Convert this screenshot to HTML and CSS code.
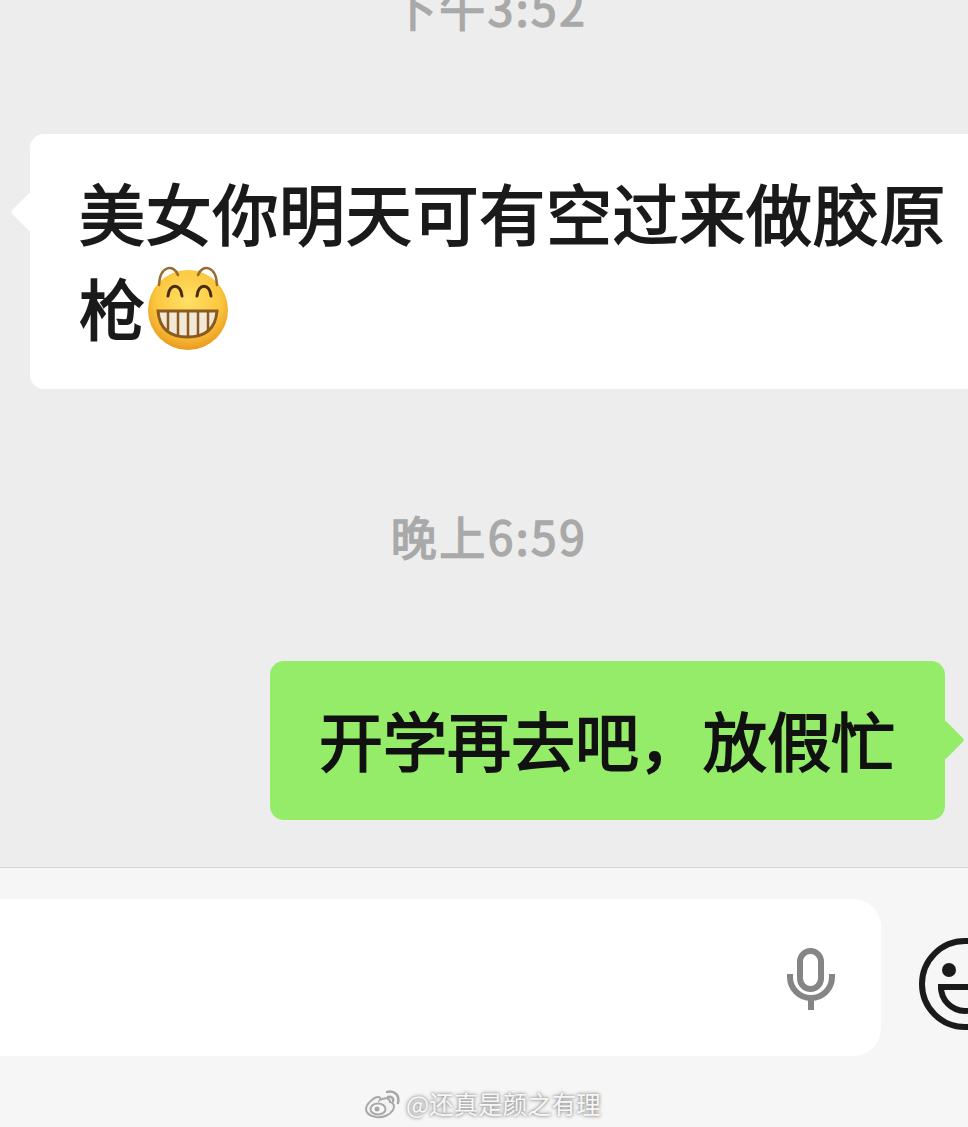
FILE: index.html
```html
<!DOCTYPE html>
<html lang="zh-CN">
<head>
    <meta charset="UTF-8">
    <meta name="viewport" content="width=device-width, initial-scale=1.0">
    <title>聊天</title>
    <link rel="stylesheet" href="styles.css">
</head>
<body>
    <!-- Messages -->
    <main class="chat">
        <div class="time time-first">下午3:52</div>
        <div class="bubble bubble-in">
            美女你明天可有空过来做胶原枪<svg class="grin" viewBox="0 0 82 84" role="img" aria-label="呲牙">
                <defs>
                    <radialGradient id="face" cx="50%" cy="38%" r="62%">
                        <stop offset="0" stop-color="#ffe066"/>
                        <stop offset="0.65" stop-color="#fbc73e"/>
                        <stop offset="1" stop-color="#eb9a1f"/>
                    </radialGradient>
                </defs>
                <circle cx="41" cy="44" r="40" fill="url(#face)"/>
                <path d="M12 19C13 -1 27 -2 31 9M51 9C55 -2 69 -1 70 19" fill="none" stroke="#9a6b2c" stroke-width="2.500" stroke-linecap="round"/>
                <path d="M21 30C22 17 34 17 35 30M50 30C51 17 63 17 64 30" fill="none" stroke="#4a2a0c" stroke-width="3" stroke-linecap="round"/>
                <path d="M11 45H70Q68 71 40.500 71Q13 71 11 45Z" fill="#f1e8d8" stroke="#8a5a1e" stroke-width="3"/>
                <path d="M21 46V64M31 46V70M41 46V71M51 46V70M61 46V64" fill="none" stroke="#8a5a1e" stroke-width="2.500"/>
            </svg>
        </div>
        <div class="time">晚上6:59</div>
        <div class="bubble bubble-out">开学再去吧，放假忙</div>
    </main>

    <!-- Input bar -->
    <footer class="composer">
        <div class="input-box">
            <svg class="mic" viewBox="0 0 48 62" role="img" aria-label="语音">
                <rect x="13" y="3" width="21" height="38" rx="10.500" fill="none" stroke="#858585" stroke-width="6"/>
                <path d="M3 26V29A21 21 0 0 0 45 29V26" fill="none" stroke="#858585" stroke-width="6"/>
                <path d="M24 50V62" fill="none" stroke="#858585" stroke-width="6"/>
            </svg>
        </div>
        <svg class="smile" viewBox="0 0 92 92" role="img" aria-label="表情">
            <circle cx="46" cy="46" r="43" fill="none" stroke="#1a1a1a" stroke-width="6"/>
            <circle cx="30" cy="32" r="7" fill="#1a1a1a"/>
            <path d="M19 49H92M22 49A24 24 0 0 0 70 49" fill="none" stroke="#1a1a1a" stroke-width="6"/>
        </svg>
    </footer>

    <!-- Watermark -->
    <div class="watermark">
        <svg class="weibo" viewBox="0 0 36 30" role="img" aria-label="微博">
            <path d="M15 11C20 8 25 9 25 13C29 14 30 17 28 21C25 26 18 29 11 28C5 27 1 24 1 20C1 15 9 8 13 8C15 8 16 9 15 11Z" fill="#f3f3f3" stroke="#a8a8a8" stroke-width="2"/>
            <ellipse cx="13" cy="20" rx="7.500" ry="5.500" fill="#f8f8f8" stroke="#a8a8a8" stroke-width="2"/>
            <circle cx="12" cy="20" r="2.500" fill="#a8a8a8"/>
            <path d="M22 3C29 1 35 6 33 14M23 8C26 7 29 9 28 12" fill="none" stroke="#a8a8a8" stroke-width="2.500" stroke-linecap="round"/>
        </svg>
        <span>@还真是颜之有理</span>
    </div>
</body>
</html>
```

FILE: styles.css
```css
/* General Styles */
html, body {
    height: 100%;
    overflow: hidden;
}

body {
    position: relative;
    margin: 0;
    display: flex;
    flex-direction: column;
    font-family: "Noto Sans CJK SC", "Noto Sans", sans-serif;
    background-color: #f6f6f6;
    color: #1a1a1a;
}

/* Messages */
.chat {
    height: 867px;
    flex-shrink: 0;
    background-color: #ededed;
}

.time {
    height: 60px;
    margin-top: 116px;
    padding-left: 10px;
    line-height: 60px;
    font-size: 46px;
    letter-spacing: 2.500px;
    -webkit-text-stroke: 1.500px #a9a9a9;
    text-align: center;
    color: #a9a9a9;
}

.time-first {
    margin-top: -24px;
}

.bubble {
    position: relative;
    box-sizing: border-box;
    padding: 30px 50px 35px;
    border-radius: 14px;
    line-height: 95px;
}

.bubble::after {
    content: "";
    position: absolute;
    width: 28px;
    height: 28px;
    border-radius: 3px;
    background-color: inherit;
    transform: rotate(45deg);
}

.bubble-in {
    width: 970px;
    margin: 98px 0 0 30px;
    padding-left: 49px;
    background-color: #fff;
    font-size: 66px;
    letter-spacing: 0.700px;
    -webkit-text-stroke: 1.800px #1a1a1a;
}

.bubble-in::after {
    top: 64px;
    left: -14px;
}

.bubble-out {
    width: 675px;
    height: 159px;
    margin: 96px 0 0 270px;
    padding: 30px 49px;
    background-color: #95ec69;
    font-size: 64px;
    color: #111;
    -webkit-text-stroke: 1.800px #111;
}

.bubble-out::after {
    top: 65px;
    right: -14px;
}

.grin {
    width: 82px;
    height: 84px;
    margin-left: 1px;
    vertical-align: -15px;
    -webkit-text-stroke: 0;
}

/* Input bar */
.composer {
    flex: 1;
    display: flex;
    align-items: flex-start;
    gap: 38px;
    padding-top: 31px;
    border-top: 1px solid #d6d6d6;
}

.input-box {
    width: 921px;
    height: 157px;
    flex-shrink: 0;
    margin-left: -40px;
    padding-right: 46px;
    box-sizing: border-box;
    display: flex;
    align-items: center;
    justify-content: flex-end;
    border-radius: 28px;
    background-color: #fff;
}

.mic {
    width: 48px;
    height: 62px;
    margin-top: 3px;
}

.smile {
    width: 92px;
    height: 92px;
    flex-shrink: 0;
    margin-top: 39px;
}

/* Watermark */
.watermark {
    position: absolute;
    left: 365px;
    top: 1088px;
    display: flex;
    align-items: center;
    gap: 5px;
    font-size: 24.500px;
    line-height: 32px;
    white-space: nowrap;
    color: #f7f7f7;
    text-shadow: 0 0 3px #8c8c8c, 0 0 4px #a5a5a5;
}

.weibo {
    width: 36px;
    height: 30px;
}
```
